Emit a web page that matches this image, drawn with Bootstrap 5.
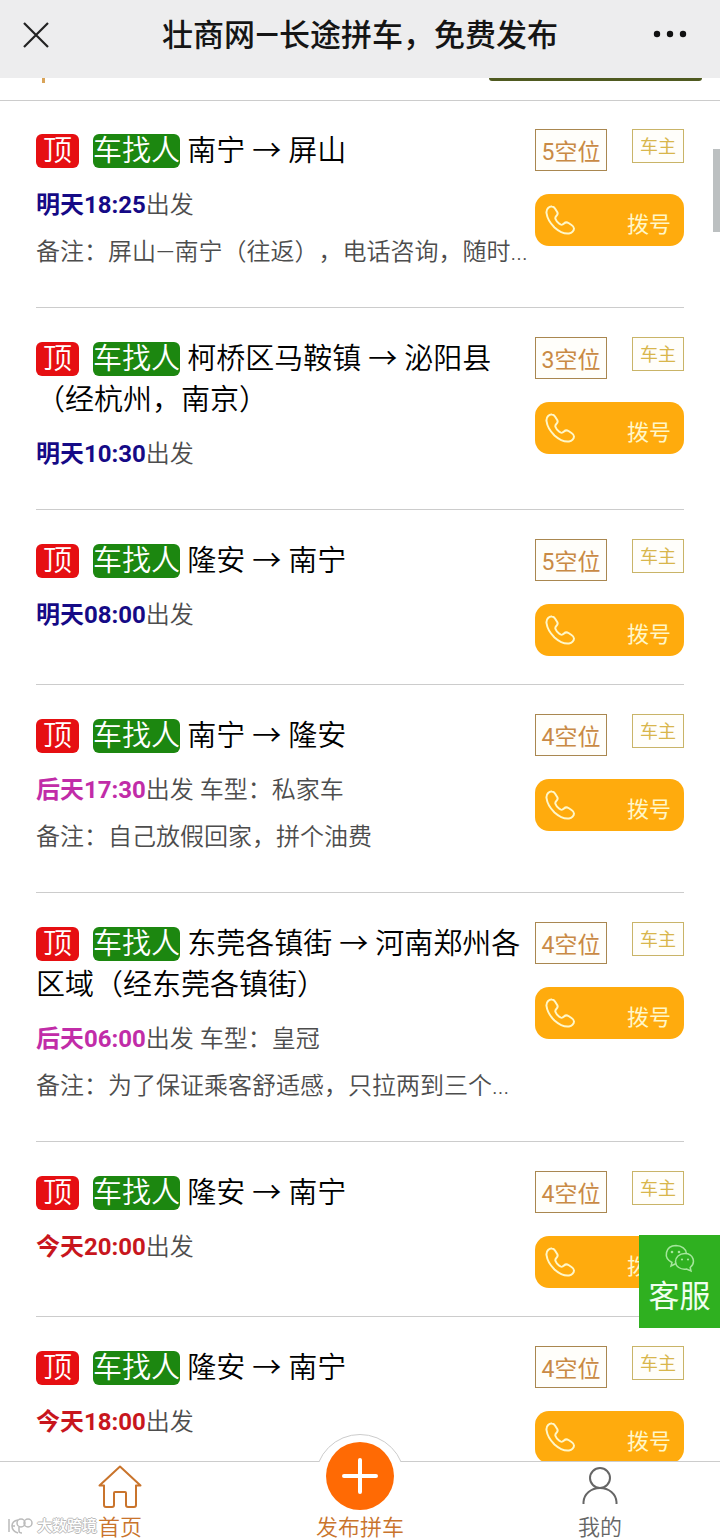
<!DOCTYPE html>
<html lang="zh-CN">
<head>
<meta charset="utf-8">
<meta name="viewport" content="width=device-width, initial-scale=1">
<title>壮商网—长途拼车，免费发布</title>
<link href="https://cdn.jsdelivr.net/npm/bootstrap@5.3.0/dist/css/bootstrap.min.css" rel="stylesheet">
<style>
body{font-family:Roboto,"Noto Sans CJK SC",sans-serif;color:#4d4d4d;background:#fff;text-spacing-trim:space-all}
.topbar{height:78px;background:#ededee;padding:0 32px 6px 20px;color:#151515}
.topbar h1{font-size:31px;font-weight:500;line-height:40px;padding-left:16px}
.filter-strip{height:23px;border-bottom:1px solid #ccc;padding:0 18px 0 42px}
.filter-mark{width:3px;height:5px;background:#d9a45a}
.filter-btn{width:213px;height:3px;background:#4f5a20;border-radius:0 0 6px 6px}
.trip{margin:0 36px;border-bottom:1px solid #ccc;padding-top:28px}
.trip + .trip{padding-top:29px}
.trip:last-child{border-bottom:0}
.trip-text{padding:2px 0 31px}
.trip h2{font-size:29px;font-weight:350;line-height:41px;color:#000;margin:0 0 10px}
.tag-top,.tag-kind{color:#fff;border-radius:6px}
.tag-top{background:#e60f12;padding:0 7px;margin-right:7px}
.tag-kind{background:#1c8710}
.meta{font-size:24px;font-weight:350;line-height:47px;margin:0;white-space:nowrap}
.meta b{font-weight:700}
.d-tomorrow{color:#150a86}
.d-after{color:#c12ca8}
.d-today{color:#c8161d}
.trip-side{width:149px;padding-bottom:28px}
.seats{font-size:23px;line-height:28px;padding:9px 0 3px;width:72px;border:1px solid #a98750;color:#c98a45;background:#fffefa;text-align:center}
.owner{font-size:18px;line-height:34px;width:52px;height:34px;border:1px solid #c9b468;color:#d8b64c;background:#fffefa;text-align:center}
.dial{height:52px;margin-top:23px;background:#ffab0d;border-radius:14px;border:0;color:#fff7c8;font-size:22px;line-height:28px;padding:10px 13px 0 10px}
.dial svg{margin-top:-11px}
.scroll-thumb{width:7px;height:83px;top:149px;right:0;background:#bcc0c1}
.service{right:0;bottom:212px;width:81px;height:93px;background:#2fb020;color:#f0fff0;font-size:31px;line-height:48px;padding-top:8px}
.tabs{height:79px;border-top:1px solid #ccc;background:#fff;font-size:22px;font-weight:350;line-height:24px}
.tabs a{color:#666;text-decoration:none;height:78px;padding-top:3px}
.tabs a.on{color:#c9742c}
.publish-ring{top:-28px;left:50%;margin-left:-45px;width:90px;height:28px;overflow:hidden}
.publish-ring::before{content:"";display:block;width:90px;height:90px;border:1px solid #ccc;border-radius:50%;background:#fff}
.publish-dot{top:-20px;left:50%;margin-left:-34px;width:68px;height:68px;border-radius:50%;background:#ff6a04}
.stamp{left:7px;bottom:2px;font-size:15px;font-weight:500;line-height:24px;color:#fff;text-shadow:1px 0 #bbb,-1px 0 #bbb,0 1px #bbb,0 -1px #bbb}
</style>
</head>
<body>
<svg class="d-none" xmlns="http://www.w3.org/2000/svg">
<symbol id="phone" viewBox="0 0 30 30"><path d="M7 1.500C4.500 1 1 4 1.500 8 2 12 5 18 9.500 22.500 14 26.500 20 29 24 28.500c3-.5 5-3 5-5 0-1.500-1-2.500-2.500-3.500l-3-2c-1.700-1-3-1-4.500.5-2 2-3 1.700-5 0-1.500-1.300-3-3-3.500-4.500-.5-1.300 0-2.200 1-3.200 1.200-1.100 1.500-2.300.7-3.800L10 3.500C9.200 2.200 8.300 1.700 7 1.500Z" fill="none" stroke="currentColor" stroke-width="2" stroke-linejoin="round"/></symbol>
</svg>
<div class="vh-100 d-flex flex-column position-relative overflow-hidden">
<header class="topbar d-flex align-items-center justify-content-between flex-shrink-0">
<button class="btn p-0 border-0 d-flex" aria-label="关闭"><svg width="32" height="32" viewBox="0 0 32 32" fill="none" stroke="#222" stroke-width="2.200"><path d="M4 3 28 27M28 3 4 27"/></svg></button>
<h1 class="m-0">壮商网—长途拼车，免费发布</h1>
<button class="btn p-0 border-0 d-flex" aria-label="更多"><svg width="36" height="12" viewBox="0 0 36 12" fill="#111"><circle cx="5" cy="4" r="3.200"/><circle cx="18" cy="4" r="3.200"/><circle cx="31" cy="4" r="3.200"/></svg></button>
</header>
<div class="filter-strip d-flex justify-content-between flex-shrink-0"><span class="filter-mark"></span><span class="filter-btn"></span></div>
<main class="flex-fill overflow-hidden">

<article class="trip d-flex justify-content-between">
<div class="trip-text flex-fill"><h2><span class="tag-top">顶</span> <span class="tag-kind">车找人</span> 南宁 → 屏山</h2>
<p class="meta"><b class="d-tomorrow">明天18:25</b>出发</p><p class="meta">备注：屏山—南宁（往返），电话咨询，随时...</p></div>
<div class="trip-side flex-shrink-0"><div class="d-flex justify-content-between align-items-start"><span class="seats">5空位</span><span class="owner">车主</span></div>
<button class="dial w-100 d-flex justify-content-between align-items-center"><svg width="30" height="30"><use href="#phone"/></svg>拨号</button></div>
</article>

<article class="trip d-flex justify-content-between">
<div class="trip-text flex-fill"><h2><span class="tag-top">顶</span> <span class="tag-kind">车找人</span> 柯桥区马鞍镇 → 泌阳县（经杭州，南京）</h2>
<p class="meta"><b class="d-tomorrow">明天10:30</b>出发</p></div>
<div class="trip-side flex-shrink-0"><div class="d-flex justify-content-between align-items-start"><span class="seats">3空位</span><span class="owner">车主</span></div>
<button class="dial w-100 d-flex justify-content-between align-items-center"><svg width="30" height="30"><use href="#phone"/></svg>拨号</button></div>
</article>

<article class="trip d-flex justify-content-between">
<div class="trip-text flex-fill"><h2><span class="tag-top">顶</span> <span class="tag-kind">车找人</span> 隆安 → 南宁</h2>
<p class="meta"><b class="d-tomorrow">明天08:00</b>出发</p></div>
<div class="trip-side flex-shrink-0"><div class="d-flex justify-content-between align-items-start"><span class="seats">5空位</span><span class="owner">车主</span></div>
<button class="dial w-100 d-flex justify-content-between align-items-center"><svg width="30" height="30"><use href="#phone"/></svg>拨号</button></div>
</article>

<article class="trip d-flex justify-content-between">
<div class="trip-text flex-fill"><h2><span class="tag-top">顶</span> <span class="tag-kind">车找人</span> 南宁 → 隆安</h2>
<p class="meta"><b class="d-after">后天17:30</b>出发 车型：私家车</p><p class="meta">备注：自己放假回家，拼个油费</p></div>
<div class="trip-side flex-shrink-0"><div class="d-flex justify-content-between align-items-start"><span class="seats">4空位</span><span class="owner">车主</span></div>
<button class="dial w-100 d-flex justify-content-between align-items-center"><svg width="30" height="30"><use href="#phone"/></svg>拨号</button></div>
</article>

<article class="trip d-flex justify-content-between">
<div class="trip-text flex-fill"><h2><span class="tag-top">顶</span> <span class="tag-kind">车找人</span> 东莞各镇街 → 河南郑州各区域（经东莞各镇街）</h2>
<p class="meta"><b class="d-after">后天06:00</b>出发 车型：皇冠</p><p class="meta">备注：为了保证乘客舒适感，只拉两到三个...</p></div>
<div class="trip-side flex-shrink-0"><div class="d-flex justify-content-between align-items-start"><span class="seats">4空位</span><span class="owner">车主</span></div>
<button class="dial w-100 d-flex justify-content-between align-items-center"><svg width="30" height="30"><use href="#phone"/></svg>拨号</button></div>
</article>

<article class="trip d-flex justify-content-between">
<div class="trip-text flex-fill"><h2><span class="tag-top">顶</span> <span class="tag-kind">车找人</span> 隆安 → 南宁</h2>
<p class="meta"><b class="d-today">今天20:00</b>出发</p></div>
<div class="trip-side flex-shrink-0"><div class="d-flex justify-content-between align-items-start"><span class="seats">4空位</span><span class="owner">车主</span></div>
<button class="dial w-100 d-flex justify-content-between align-items-center"><svg width="30" height="30"><use href="#phone"/></svg>拨号</button></div>
</article>

<article class="trip d-flex justify-content-between">
<div class="trip-text flex-fill"><h2><span class="tag-top">顶</span> <span class="tag-kind">车找人</span> 隆安 → 南宁</h2>
<p class="meta"><b class="d-today">今天18:00</b>出发</p></div>
<div class="trip-side flex-shrink-0"><div class="d-flex justify-content-between align-items-start"><span class="seats">4空位</span><span class="owner">车主</span></div>
<button class="dial w-100 d-flex justify-content-between align-items-center"><svg width="30" height="30"><use href="#phone"/></svg>拨号</button></div>
</article>
</main>

<nav class="tabs d-flex position-relative flex-shrink-0">
<a href="#" class="on col-4 d-flex flex-column align-items-center justify-content-between"><svg width="44" height="44" viewBox="0 0 44 44" fill="none" stroke="currentColor" stroke-width="2" stroke-linejoin="round"><path d="M22 1.500 1.500 20.500H6V40q0 2 2 2h6q2 0 2-2V28q0-1 1-1h10q1 0 1 1v12q0 2 2 2h6q2 0 2-2V20.500h4.500Z"/></svg>首页</a>
<a href="#" class="on col-4 d-flex flex-column align-items-center justify-content-end position-relative"><span class="publish-ring position-absolute"></span><span class="publish-dot position-absolute d-flex align-items-center justify-content-center"><svg width="36" height="36" viewBox="0 0 36 36" stroke="#fff" stroke-width="4" stroke-linecap="round"><path d="M18 2v32M2 18h32"/></svg></span>发布拼车</a>
<a href="#" class="col-4 d-flex flex-column align-items-center justify-content-between"><svg width="38" height="40" viewBox="0 0 38 40" fill="none" stroke="currentColor" stroke-width="2"><circle cx="19" cy="13" r="10"/><path d="M2.500 39V37C3 29 10 23 19 23s16 6 16.500 14v2"/></svg>我的</a>
<span class="stamp position-absolute d-flex align-items-center gap-1"><svg width="26" height="18" viewBox="0 0 26 18" fill="none" stroke="#bbb" stroke-width="1.500"><path d="M2 2v13M11 3Q5 4 5 9t6 7M5 9h3"/><circle cx="14" cy="6" r="4"/><circle cx="21" cy="6" r="4"/><path d="M12 10v4q0 2 3 2"/></svg>大数跨境</span>
</nav>

<a href="#" class="service position-absolute d-flex flex-column align-items-center text-decoration-none"><svg width="32" height="30" viewBox="0 0 32 30" fill="none" stroke="#a5e69c" stroke-width="1.500"><path d="M12 20.500 7 23l1-3.500C-1 15 1 3 12 2.500c6 0 10 4 10.300 7.500"/><path d="M21 10.500c-6 0-9.500 4-9.500 8 0 5 5 8.500 11 7.500l4.500 2-.8-3.500c6-5 3-14-5.200-14Z"/><g fill="#a5e69c" stroke="none"><circle cx="8" cy="9" r="1.300"/><circle cx="15" cy="9" r="1.300"/><circle cx="18" cy="16.500" r="1.100"/><circle cx="24" cy="16.500" r="1.100"/></g></svg>客服</a>
<div class="scroll-thumb position-absolute"></div>
</div>
<script src="https://cdn.jsdelivr.net/npm/bootstrap@5.3.0/dist/js/bootstrap.bundle.min.js"></script>
</body>
</html>
